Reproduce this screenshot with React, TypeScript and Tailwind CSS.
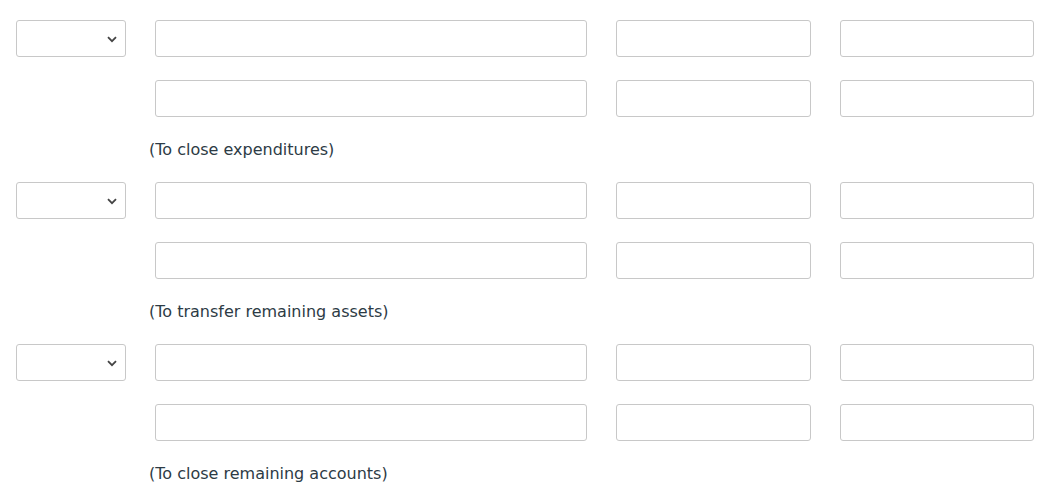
import React from "react";

function Select() {
  return (
    <div className="relative w-[110px] h-[37px] shrink-0 border border-[#c8c8c8] rounded-[3px] bg-white">
      <svg className="absolute left-[90px] top-[15px]" width="10" height="7" viewBox="0 0 10 7">
        <path d="M1 1.2 L5 5.2 L9 1.2" fill="none" stroke="#444" strokeWidth="1.8" />
      </svg>
    </div>
  );
}

function Box({ w }: { w: string }) {
  return <div className={`${w} h-[37px] shrink-0 border border-[#c8c8c8] rounded-[3px] bg-white`} />;
}

function Row({ sel }: { sel: boolean }) {
  return (
    <div className="flex items-start">
      {sel ? <Select /> : <div className="w-[110px] h-[37px] shrink-0" />}
      <div className="w-[29px] shrink-0" />
      <div className="w-[432px] h-[37px] shrink-0 border border-[#c8c8c8] rounded-[3px] bg-white" />
      <div className="w-[29px] shrink-0" />
      <div className="w-[195px] h-[37px] shrink-0 border border-[#c8c8c8] rounded-[3px] bg-white" />
      <div className="w-[29px] shrink-0" />
      <div className="w-[194px] h-[37px] shrink-0 border border-[#c8c8c8] rounded-[3px] bg-white" />
    </div>
  );
}

function Group({ label }: { label: string }) {
  return (
    <div className="flex flex-col">
      <Row sel={true} />
      <div className="h-[23px]" />
      <Row sel={false} />
      <div className="h-[65px] pl-[133px] pt-[21px] text-[16px] leading-[24px] text-[#2d3b45]" style={{ fontFamily: '"DejaVu Sans", Verdana, sans-serif' }}>
        {label}
      </div>
    </div>
  );
}

export default function App() {
  return (
    <div className="w-[1053px] h-[499px] bg-white pl-[16px] pt-[20px] overflow-hidden">
      <Group label="(To close expenditures)" />
      <Group label="(To transfer remaining assets)" />
      <Group label="(To close remaining accounts)" />
    </div>
  );
}
